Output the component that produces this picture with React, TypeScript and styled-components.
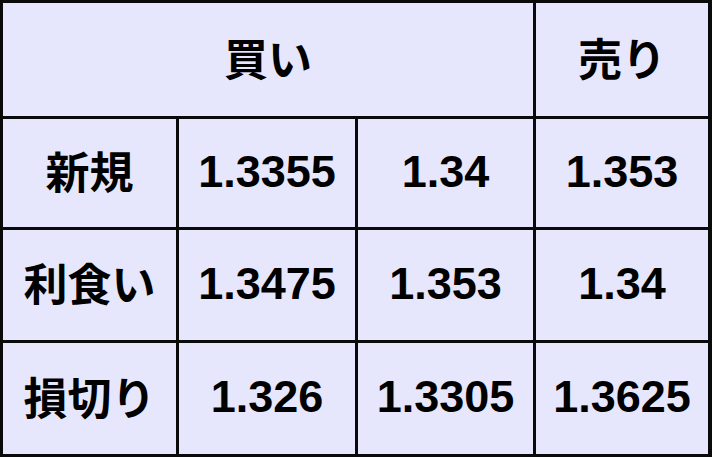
import React from "react";
import styled, { createGlobalStyle } from "styled-components";

const Global = createGlobalStyle`
  html, body { margin: 0; padding: 0; background: #000; }
  #root { width: 712px; height: 457px; }
`;

const Table = styled.div`
  box-sizing: border-box;
  width: 712px;
  height: 457px;
  background: #0a0a0a;
  padding: 3px 4px 3px 3px;
  display: grid;
  grid-template-columns: 173px 176px 175px 1fr;
  grid-template-rows: 113px 108px 110px 1fr;
  gap: 3px;
`;

const Cell = styled.div<{ $span?: number; $jp?: boolean }>`
  box-sizing: border-box;
  background: #e6e6fc;
  grid-column: span ${(p) => p.$span ?? 1};
  display: flex;
  align-items: center;
  justify-content: center;
  padding-bottom: ${(p) => (p.$jp ? "6px" : "4px")};
  color: #000;
  font-weight: 700;
  font-family: ${(p) =>
    p.$jp
      ? '"Noto Sans CJK JP", "Noto Sans", sans-serif'
      : '"Liberation Sans", Arial, sans-serif'};
  font-size: ${(p) => (p.$jp ? "44px" : "45px")};
  line-height: 1;
  white-space: nowrap;
`;

const rows: [string, string, string, string][] = [
  ["新規", "1.3355", "1.34", "1.353"],
  ["利食い", "1.3475", "1.353", "1.34"],
  ["損切り", "1.326", "1.3305", "1.3625"],
];

export default function App() {
  return (
    <>
      <Global />
      <Table>
        <Cell $span={3} $jp>
          買い
        </Cell>
        <Cell $jp>売り</Cell>
        {rows.map((r) => (
          <React.Fragment key={r[0]}>
            <Cell $jp>{r[0]}</Cell>
            <Cell>{r[1]}</Cell>
            <Cell>{r[2]}</Cell>
            <Cell>{r[3]}</Cell>
          </React.Fragment>
        ))}
      </Table>
    </>
  );
}
